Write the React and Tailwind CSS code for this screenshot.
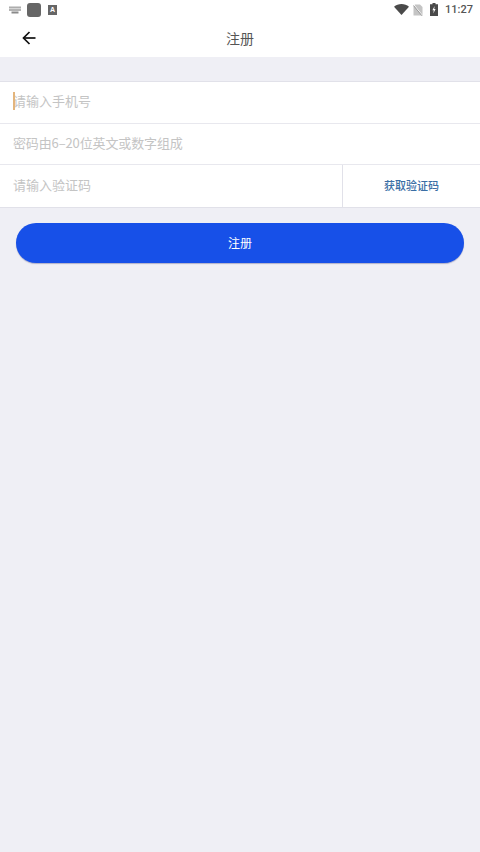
const cjk = { fontFamily: '"Noto Sans CJK SC", "Noto Sans", sans-serif' };

function StatusBar() {
  return (
    <div className="h-[19px] bg-white flex items-center justify-between pl-[9px] pr-[7px]">
      <div className="flex items-center gap-[6px]">
        <svg width="12" height="8" viewBox="0 0 12 8" fill="#8a8a8a">
          <rect x="0" y="0.5" width="12" height="2" opacity="0.7" />
          <rect x="0" y="3.2" width="12" height="1.6" opacity="0.8" />
          <rect x="2.5" y="5.5" width="7" height="2" />
        </svg>
        <div className="w-[14px] h-[14px] rounded-[3px] bg-[#666666]" />
        <div className="w-[9px] h-[10px] ml-[1px] bg-[#666666] flex items-center justify-center text-white text-[7px] font-bold leading-none" style={{ fontFamily: '"Liberation Sans", sans-serif' }}>A</div>
      </div>
      <div className="flex items-center">
        <svg width="15" height="11" viewBox="0 0 15 11" className="mr-[4px]">
          <path d="M0 2.8 C4 -0.9 11 -0.9 15 2.8 L7.5 11 Z" fill="#4a4a4a" />
        </svg>
        <svg width="10" height="12" viewBox="0 0 10 12" className="mr-[7px]">
          <path d="M2 0.5 H7 L9.5 3 V11.5 H0.5 V2 Z" fill="#c4c4c4" />
          <path d="M0.5 0.5 L9.5 11.5" stroke="#ffffff" strokeWidth="1" />
          <path d="M0.5 1.5 L9 11.8" stroke="#8a8a8a" strokeWidth="0.8" />
        </svg>
        <svg width="8" height="13" viewBox="0 0 8 13" className="mr-[7px]">
          <path d="M2.5 0 H5.5 V1.2 H8 V13 H0 V1.2 H2.5 Z" fill="#4a4a4a" />
          <path d="M4.6 3 L2.4 7.2 H3.8 L3.3 10.4 L5.6 6 H4.2 Z" fill="#ffffff" />
        </svg>
        <span className="text-[11px] leading-none font-medium text-[#555555]" style={{ fontFamily: 'Roboto, sans-serif' }}>11:27</span>
      </div>
    </div>
  );
}

export default function App() {
  return (
    <div className="w-[480px] h-[852px] bg-[#efeff5] flex flex-col overflow-hidden" style={cjk}>
      <StatusBar />
      <header className="h-[38px] bg-white flex items-center justify-center relative">
        <svg className="absolute left-[22px] top-[12px]" width="14" height="14" viewBox="0 0 14 14" fill="none" stroke="#111111" strokeWidth="1.7">
          <path d="M13.5 7 H1.5" />
          <path d="M7.5 1 L1.5 7 L7.5 13" />
        </svg>
        <h1 className="text-[14px] leading-none text-[#555555] font-normal pb-[1px]">注册</h1>
      </header>

      <div className="mt-[24px] bg-white border-y border-[#e1e1e9]">
        <div className="h-[42px] flex items-center pl-[13px] pb-[3px] relative border-b border-[#e8e8ee]">
          <span className="absolute left-[13px] top-[10px] w-[1.5px] h-[18px] bg-[#e3b57c]" />
          <span className="text-[13px] text-[#c4c4c4]">请输入手机号</span>
        </div>
        <div className="h-[41px] flex items-center pl-[13px] pb-[3px] border-b border-[#e8e8ee]">
          <span className="text-[13px] tracking-[-0.13px] text-[#c4c4c4]">密码由6–20位英文或数字组成</span>
        </div>
        <div className="h-[42px] flex items-center">
          <span className="flex-1 pl-[13px] pb-[2px] text-[13px] text-[#c4c4c4]">请输入验证码</span>
          <div className="w-[138px] h-full border-l border-[#e1e1e9] flex items-center justify-center pb-[2px]">
            <span className="text-[11px] font-medium text-[#3a6ea5]">获取验证码</span>
          </div>
        </div>
      </div>

      <button className="mt-[15px] mx-[16px] h-[40px] rounded-[20px] bg-[#1750e8] text-white text-[12px] shadow-[0_1px_1px_rgba(60,60,120,0.35)]">
        注册
      </button>
    </div>
  );
}
